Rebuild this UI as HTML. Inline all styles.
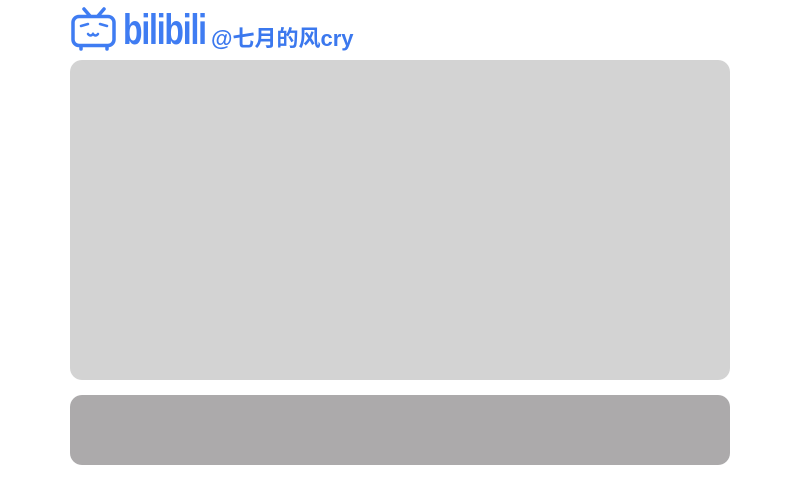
<!DOCTYPE html>
<html><head><meta charset="utf-8"><style>
html,body{margin:0;padding:0;background:#fff;width:800px;height:480px;overflow:hidden;position:relative;font-family:"Liberation Sans","Noto Sans CJK SC",sans-serif}
.box1{position:absolute;left:70px;top:60px;width:660px;height:320px;background:#d3d3d3;border-radius:12px}
.box2{position:absolute;left:70px;top:395px;width:660px;height:70px;background:#acaaab;border-radius:12px}
.logo{position:absolute;left:71px;top:7px}
.bl{position:absolute;left:123px;top:6px;font-size:40px;line-height:46px;font-weight:bold;color:#3f7cf2;letter-spacing:-1.5px;transform:scale(0.8,1.06);transform-origin:left top;font-family:"Liberation Sans",sans-serif}
.name{position:absolute;left:211px;top:23px;font-size:22px;font-weight:bold;color:#3b78ee;line-height:32px;font-family:"Liberation Sans","Noto Sans CJK SC",sans-serif}
</style></head><body>
<svg class="logo" width="46" height="44" viewBox="0 0 46 44">
<g fill="none" stroke="#3f7cf2" stroke-width="3.5" stroke-linecap="round">
<path d="M13 2 L19 9 M33 2 L27 9"/>
<rect x="2" y="9.5" width="41" height="29" rx="6"/>
<path d="M10 40 L10 42 M36 40 L36 42"/>
</g>
<g stroke="#3f7cf2" stroke-width="2.5" stroke-linecap="round" fill="none">
<path d="M10 19 L17 17 M29 17 L36 19"/>
<path d="M17 27 Q19.5 30 22 27 Q24.5 30 27 27"/>
</g>
</svg>
<div class="bl">bilibili</div>
<div class="name">@七月的风cry</div>
<div class="box1"></div>
<div class="box2"></div>
</body></html>
